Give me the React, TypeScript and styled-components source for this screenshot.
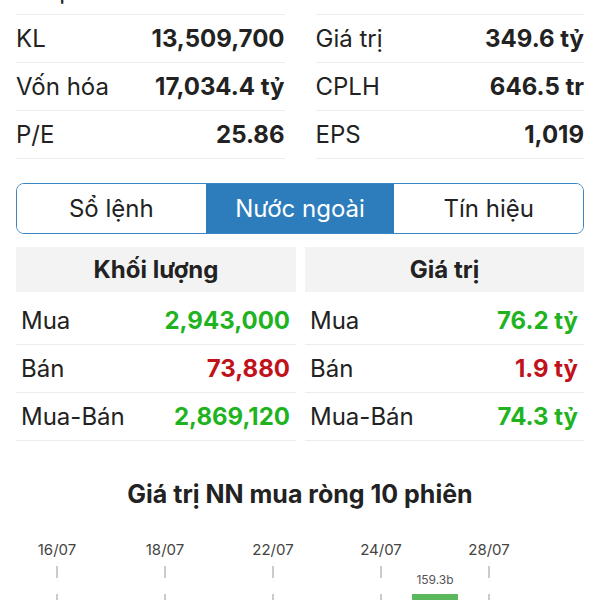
import styled, { createGlobalStyle } from 'styled-components'

const GlobalStyle = createGlobalStyle`
  body {
    margin: 0;
    background: #fff;
    font-family: Inter, "Open Sans", "Liberation Sans", sans-serif;
    color: #222;
    overflow: hidden;
  }
`

const Page = styled.div`
  width: 600px;
  height: 600px;
  overflow: hidden;
`

const Stats = styled.div`
  display: grid;
  grid-template-columns: 1fr 1fr;
  column-gap: 31px;
  padding: 0 16px;
  margin-top: -33px;
`

const StatCol = styled.div`
  display: flex;
  flex-direction: column;
`

const StatRow = styled.div`
  display: flex;
  align-items: center;
  justify-content: space-between;
  height: 47px;
  border-bottom: 1px solid #ececec;
  font-size: 24px;
`

const StatLabel = styled.span`
  font-weight: 400;
  color: #222;
`

const StatValue = styled.span<{ $color?: string }>`
  font-weight: 700;
  color: ${(p) => p.$color || '#222'};
`

const Tabs = styled.div`
  display: grid;
  grid-template-columns: repeat(3, 1fr);
  margin: 24px 16px 0;
  height: 51px;
  border: 1.5px solid #3a86c4;
  border-radius: 8px;
  overflow: hidden;
  box-sizing: border-box;
`

const Tab = styled.div<{ $active?: boolean }>`
  display: flex;
  align-items: center;
  justify-content: center;
  font-size: 24px;
  background: ${(p) => (p.$active ? '#2d7dbd' : '#fff')};
  color: ${(p) => (p.$active ? '#fff' : '#222')};
`

const Foreign = styled.div`
  display: grid;
  grid-template-columns: 280px 279px;
  column-gap: 9px;
  margin: 13px 16px 0;
`

const FCol = styled.div`
  display: flex;
  flex-direction: column;
`

const FHead = styled.div`
  height: 45px;
  display: flex;
  align-items: center;
  justify-content: center;
  background: #f3f3f3;
  font-size: 24px;
  font-weight: 700;
  margin-bottom: 5px;
`

const FRow = styled.div`
  display: flex;
  align-items: center;
  justify-content: space-between;
  height: 47px;
  padding: 0 6px 0 5px;
  border-bottom: 1px solid #ececec;
  font-size: 24px;
`

const FValue = styled.span<{ $up: boolean }>`
  font-weight: 700;
  color: ${(p) => (p.$up ? '#1fb41f' : '#c1121c')};
`

const ChartTitle = styled.div`
  margin-top: 38px;
  text-align: center;
  font-size: 25px;
  font-weight: 700;
`

const Chart = styled.svg`
  display: block;
  margin-top: 17px;
`

const stats: [string, string, string?][][] = [
  [
    ['Thấp nhất', '25.70', '#d22a55'],
    ['KL', '13,509,700'],
    ['Vốn hóa', '17,034.4 tỷ'],
    ['P/E', '25.86'],
  ],
  [
    ['Cao nhất', '26.45', '#21b36b'],
    ['Giá trị', '349.6 tỷ'],
    ['CPLH', '646.5 tr'],
    ['EPS', '1,019'],
  ],
]

const foreign = [
  {
    title: 'Khối lượng',
    rows: [
      ['Mua', '2,943,000', true],
      ['Bán', '73,880', false],
      ['Mua-Bán', '2,869,120', true],
    ] as [string, string, boolean][],
  },
  {
    title: 'Giá trị',
    rows: [
      ['Mua', '76.2 tỷ', true],
      ['Bán', '1.9 tỷ', false],
      ['Mua-Bán', '74.3 tỷ', true],
    ] as [string, string, boolean][],
  },
]

const dates = ['16/07', '18/07', '22/07', '24/07', '28/07']

export default function App() {
  return (
    <Page>
      <GlobalStyle />
      <Stats>
        {stats.map((col, ci) => (
          <StatCol key={ci}>
            {col.map(([label, value, color]) => (
              <StatRow key={label}>
                <StatLabel>{label}</StatLabel>
                <StatValue $color={color}>{value}</StatValue>
              </StatRow>
            ))}
          </StatCol>
        ))}
      </Stats>

      <Tabs>
        <Tab>Sổ lệnh</Tab>
        <Tab $active>Nước ngoài</Tab>
        <Tab>Tín hiệu</Tab>
      </Tabs>

      <Foreign>
        {foreign.map((col) => (
          <FCol key={col.title}>
            <FHead>{col.title}</FHead>
            {col.rows.map(([label, value, up]) => (
              <FRow key={label}>
                <span>{label}</span>
                <FValue $up={up}>{value}</FValue>
              </FRow>
            ))}
          </FCol>
        ))}
      </Foreign>

      <ChartTitle>Giá trị NN mua ròng 10 phiên</ChartTitle>

      <Chart width="600" height="100" viewBox="0 0 600 100">
        {dates.map((d, i) => {
          const x = 57 + i * 108
          return (
            <g key={d}>
              <text x={x} y={29} textAnchor="middle" fontSize="15" fill="#444" fontFamily="Inter, sans-serif">
                {d}
              </text>
              <line x1={x} y1={40} x2={x} y2={100} stroke="#bbb" strokeWidth="1.5" strokeDasharray="12 16" />
            </g>
          )
        })}
        <text x={435} y={58} textAnchor="middle" fontSize="12" fill="#555" fontFamily="Inter, sans-serif">
          159.3b
        </text>
        <rect x={412} y={68} width={46} height={40} fill="#5cb85c" />
      </Chart>
    </Page>
  )
}
